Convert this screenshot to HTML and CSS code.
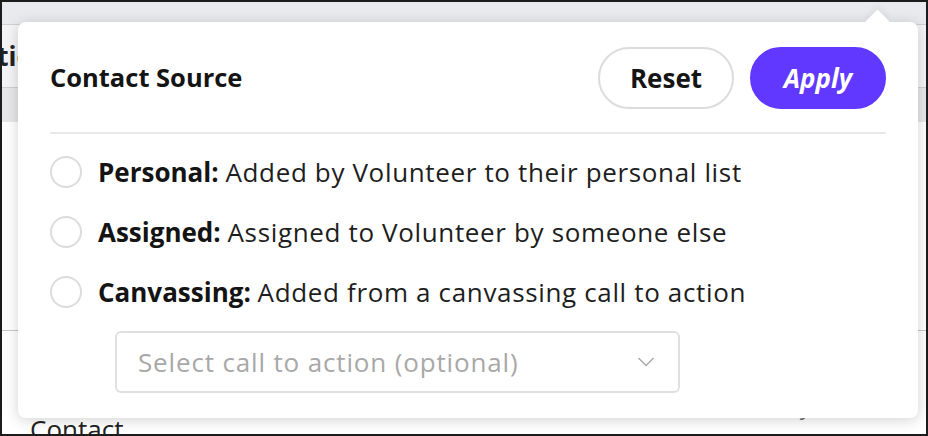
FILE: index.html
```html
<!DOCTYPE html>
<html>
<head>
<meta charset="utf-8">
<link rel="stylesheet" href="styles.css">
</head>
<body>
<div class="frame">
  <div class="page">
    <div class="topbar"></div>
    <div class="tabrow"><span class="tabtext">Actions</span></div>
    <div class="graybar"></div>
    <div class="content"></div>
    <div class="bottomrow">
      <span class="col-contact">Contact</span>
      <span class="col-activity">Last activity</span>
    </div>
  </div>

  <div class="popover">
    <div class="caret"></div>
    <div class="pop-header">
      <h2 class="pop-title">Contact Source</h2>
      <button class="btn btn-reset">Reset</button>
      <button class="btn btn-apply">Apply</button>
    </div>
    <div class="divider"></div>
    <ul class="options">
      <li class="option"><span class="radio"></span><span class="label"><b>Personal:</b> <span class="desc">Added by Volunteer to their personal list</span></span></li>
      <li class="option"><span class="radio"></span><span class="label"><b>Assigned:</b> <span class="desc">Assigned to Volunteer by someone else</span></span></li>
      <li class="option"><span class="radio"></span><span class="label"><b>Canvassing:</b> <span class="desc">Added from a canvassing call to action</span></span></li>
    </ul>
    <div class="select">
      <span class="placeholder">Select call to action (optional)</span>
      <svg class="chev" width="18" height="10" viewBox="0 0 18 10"><path d="M1.5 1 L9 8.5 L16.5 1" fill="none" stroke="#a9a9a9" stroke-width="1.5"/></svg>
    </div>
  </div>
</div>
</body>
</html>
```

FILE: styles.css
```css
html, body {
  margin: 0;
  padding: 0;
  background: #fff;
}
.frame {
  width: 928px;
  height: 436px;
  box-sizing: border-box;
  border: 2px solid #1c1c1c;
  position: relative;
  overflow: hidden;
  background: #fff;
  font-family: "Open Sans", "Noto Sans", sans-serif;
  color: #1e1e1e;
}
.page {
  display: flex;
  flex-direction: column;
}
.topbar {
  height: 22px;
  background: #e9eaee;
  border-bottom: 1px solid #cfd0d4;
}
.tabrow {
  height: 62px;
  background: #f4f4f6;
  border-bottom: 1px solid #cfcfd3;
  display: flex;
  align-items: center;
}
.tabtext {
  font-weight: 700;
  font-size: 26px;
  margin-left: -36px;
  color: #222;
}
.graybar {
  height: 34px;
  background: #e7e7ea;
}
.content {
  height: 208px;
}
.bottomrow {
  border-top: 1px solid #c9c9c9;
  display: flex;
  align-items: flex-start;
  padding-left: 28px;
  font-size: 26px;
  color: #222;
}
.col-contact {
  margin-top: 80px;
}
.col-activity {
  margin-left: 568px;
  margin-top: 60px;
  color: #666;
  font-size: 22px;
}

.popover {
  position: absolute;
  left: 16px;
  top: 20px;
  width: 900px;
  height: 396px;
  box-sizing: border-box;
  background: #fff;
  border-radius: 8px;
  box-shadow: 0 2px 14px rgba(0, 0, 0, 0.18);
  padding: 25px 32px;
}
.caret {
  position: absolute;
  right: 32px;
  top: -9px;
  width: 17px;
  height: 17px;
  background: #fff;
  transform: rotate(45deg);
  box-shadow: -3px -3px 6px rgba(0, 0, 0, 0.05);
}
.pop-header {
  position: relative;
  display: flex;
  align-items: center;
  gap: 16px;
  height: 62px;
}
.pop-title {
  margin: 0 auto 0 0;
  font-size: 25.5px;
  font-weight: 700;
  color: #141414;
  position: relative;
  top: -1px;
}
.btn {
  height: 62px;
  width: 136px;
  box-sizing: border-box;
  border-radius: 31px;
  font-family: inherit;
  font-size: 26px;
  font-weight: 700;
  cursor: pointer;
  padding: 0;
}
.btn-reset {
  background: #fff;
  border: 2px solid #dcdcdc;
  color: #151515;
}
.btn-apply {
  background: #6038ff;
  border: 2px solid #6038ff;
  color: #fff;
  font-style: italic;
}
.divider {
  margin-top: 23px;
  height: 2px;
  background: #e8e8e8;
}
.options {
  list-style: none;
  margin: 8px 0 0 0;
  padding: 0;
}
.option {
  height: 60px;
  display: flex;
  align-items: center;
  gap: 16px;
  font-size: 26px;
  color: #1e1e1e;
}
.option b {
  font-weight: 700;
  color: #141414;
}
.desc {
  letter-spacing: 0.65px;
}
.radio {
  width: 32px;
  height: 32px;
  box-sizing: border-box;
  border: 2px solid #dcdcdc;
  border-radius: 50%;
  flex: none;
}
.select {
  margin: 9px 0 0 65px;
  width: 565px;
  height: 62px;
  box-sizing: border-box;
  border: 2px solid #e0e0e0;
  border-radius: 6px;
  padding: 0 23px 0 21px;
  display: flex;
  align-items: center;
  justify-content: space-between;
}
.placeholder {
  font-size: 26px;
  letter-spacing: 0.85px;
  color: #a8a8a8;
}
.chev {
  display: block;
}
```
